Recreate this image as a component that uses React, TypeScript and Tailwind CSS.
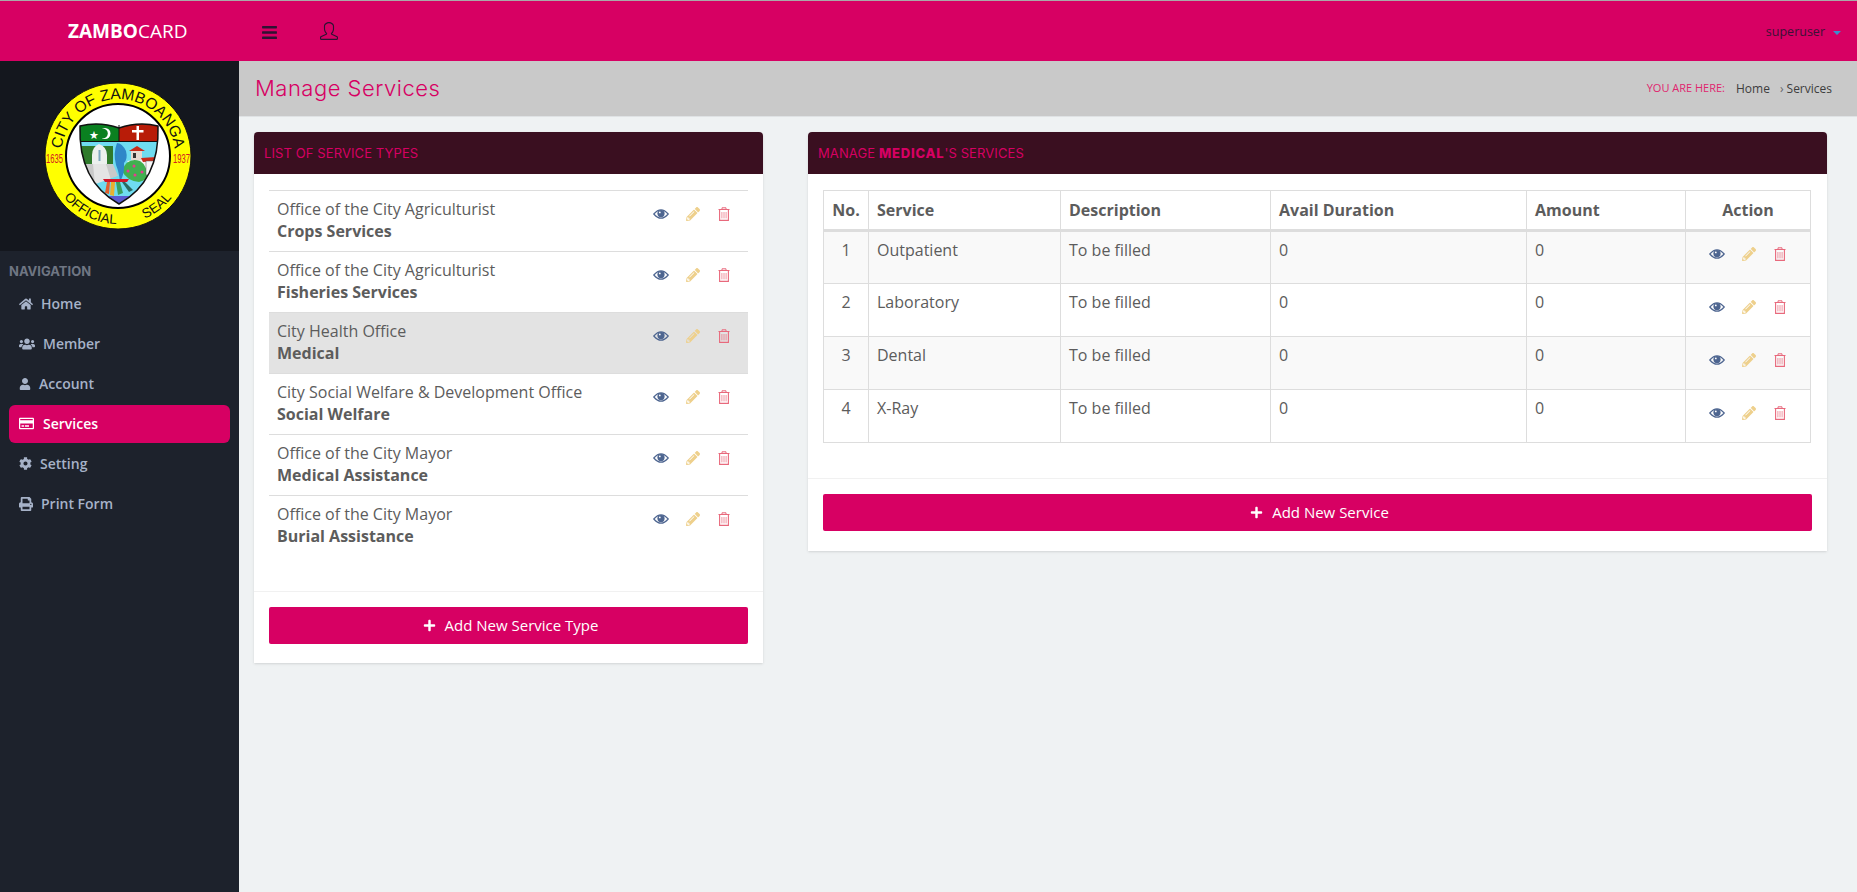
import { FaBars, FaCog, FaHome, FaPencilAlt, FaPlus, FaPrint, FaRegCreditCard, FaUser, FaUsers } from "react-icons/fa";
import { SlUser } from "react-icons/sl";

const navItems = [
    { label: "Home", icon: FaHome, gap: "gap-[8px]", size: 14 },
    { label: "Member", icon: FaUsers, gap: "gap-[8px]", size: 16 },
    { label: "Account", icon: FaUser, gap: "gap-[8px]", size: 12 },
    { label: "Services", icon: FaRegCreditCard, gap: "gap-[9px]", size: 15, active: true },
    { label: "Setting", icon: FaCog, gap: "gap-[8px]", size: 13 },
    { label: "Print Form", icon: FaPrint, gap: "gap-[8px]", size: 14 },
];

const serviceTypes = [
    { office: "Office of the City Agriculturist", name: "Crops Services" },
    { office: "Office of the City Agriculturist", name: "Fisheries Services" },
    { office: "City Health Office", name: "Medical", selected: true },
    { office: "City Social Welfare & Development Office", name: "Social Welfare" },
    { office: "Office of the City Mayor", name: "Medical Assistance" },
    { office: "Office of the City Mayor", name: "Burial Assistance" },
];

const services = ["Outpatient", "Laboratory", "Dental", "X-Ray"];

function EyeIcon() {
    return (
        <svg width="16" height="12" viewBox="0 0 16 12" className="text-[#4d6590]">
            <path d="M0.8 6 Q8 -2.4 15.2 6 Q8 14.4 0.8 6 Z" fill="none" stroke="currentColor" strokeWidth="1.2" />
            <circle cx="8" cy="5.6" r="3.6" fill="currentColor" />
            <circle cx="6.8" cy="4.4" r="0.9" fill="#fff" />
        </svg>
    );
}

function TrashIcon() {
    return (
        <svg width="12" height="14" viewBox="0 0 12 14" className="text-[#e8697c]">
            <path d="M0.5 2.5 H11.5 M4 2.5 V0.8 H8 V2.5" fill="none" stroke="currentColor" strokeWidth="1" />
            <path d="M1.6 2.5 V13.4 H10.4 V2.5" fill="none" stroke="currentColor" strokeWidth="1.1" />
            <path d="M3.9 5 V11.4 M6 5 V11.4 M8.1 5 V11.4" fill="none" stroke="currentColor" strokeWidth="1" opacity="0.7" />
        </svg>
    );
}

function RowActions() {
    return (
        <div className="flex items-center">
            <EyeIcon />
            <FaPencilAlt className="ml-[17px] text-[#eed08c]" size={14} />
            <span className="ml-[18px]"><TrashIcon /></span>
        </div>
    );
}

function Seal() {
    return (
        <svg width="150" height="150" viewBox="0 0 150 150">
            <defs>
                <path id="arcTop" d="M 21.4 94.5 A 57 57 0 1 1 128.6 94.5" />
                <path id="arcBottom" d="M 7 75 A 68 68 0 0 0 143 75" />
                <clipPath id="shieldClip">
                    <path d="M37 45 Q56 40 76 47 Q96 40 115 45 Q117 100 76 123 Q35 100 37 45 Z" />
                </clipPath>
            </defs>
            <circle cx="75" cy="75" r="73" fill="#ffff00" stroke="#111" strokeWidth="1" />
            <circle cx="75" cy="75" r="52" fill="#fff" stroke="#000" strokeWidth="2" />
            <text fontFamily="Liberation Sans, sans-serif" fontSize="15.5" fill="#111">
                <textPath href="#arcTop" startOffset="50%" textAnchor="middle">CITY OF ZAMBOANGA</textPath>
            </text>
            <text fontFamily="Liberation Sans, sans-serif" fontSize="13.5" fill="#111">
                <textPath href="#arcBottom" startOffset="35%" textAnchor="middle">OFFICIAL</textPath>
            </text>
            <text fontFamily="Liberation Sans, sans-serif" fontSize="13.5" fill="#111">
                <textPath href="#arcBottom" startOffset="71%" textAnchor="middle">SEAL</textPath>
            </text>
            <text x="3" y="82" fontFamily="Liberation Sans, sans-serif" fontSize="12" textLength="17" lengthAdjust="spacingAndGlyphs" fill="#d32020">1635</text>
            <text x="130" y="82" fontFamily="Liberation Sans, sans-serif" fontSize="12" textLength="17" lengthAdjust="spacingAndGlyphs" fill="#d32020">1937</text>
            <g clipPath="url(#shieldClip)">
                <rect x="30" y="35" width="90" height="95" fill="#6fdcf0" />
                <rect x="30" y="35" width="46" height="25" fill="#0a8020" />
                <rect x="76" y="35" width="44" height="25" fill="#b81c08" />
                <rect x="37" y="65" width="33" height="20" fill="#2f7a2c" />
                <path d="M37 83 H70 L75 95 L44 106 Z" fill="#c9c9c9" />
                <path d="M50 83 H63 L68 99 L52 104 Z" fill="#e4e4e4" />
                <path d="M56 63 Q49 66 49 74 V83 H64 V74 Q64 66 56 63 Z" fill="#ecf0ee" />
                <rect x="55.5" y="69" width="2" height="11" fill="#7fa8c0" />
                <path d="M75 95 L44 106 L76 125 L108 104 Z" fill="#6fdcf0" />
                <path d="M84 80 L114 76 V100 L106 106 Z" fill="#f2f2f2" />
                <path d="M79 90 Q84 76 97 80 Q104 84 105 98 L96 101 Q84 100 79 90 Z" fill="#41b050" />
                <circle cx="85" cy="90" r="1.5" fill="#e83a90" />
                <circle cx="91" cy="85" r="1.5" fill="#e83a90" />
                <circle cx="99" cy="91" r="1.5" fill="#e83a90" />
                <circle cx="92" cy="94" r="1.5" fill="#e83a90" />
                <path d="M86 70 L94 65 L102 70 Z" fill="#c92a1a" />
                <rect x="88" y="70" width="11" height="9" fill="#e7d9d0" />
                <rect x="90" y="72" width="3" height="5" fill="#333" />
                <path d="M98 77 L113 76 V80 L100 81 Z" fill="#c92a1a" />
                <rect x="103" y="80" width="8" height="14" fill="#f8f8f8" stroke="#555" strokeWidth="0.5" />
                <path d="M74 62 Q70 72 73 84 Q76 91 77 101 Q82 92 81 82 Q85 78 83 70 Q79 62 74 62 Z" fill="#2e87c8" />
                <path d="M62 101 H84 L86 98 H60 Z" fill="#d3162a" />
                <path d="M64 101 L62 112 L66 113 L67 101 Z" fill="#e06030" />
                <path d="M68 101 L67 114 L71 115 L72 101 Z" fill="#e8b030" />
                <path d="M73 101 L75 114 L80 112 L77 101 Z" fill="#3aa060" />
                <path d="M79 101 L86 111 L90 109 L82 101 Z" fill="#2a6a60" />
                <rect x="55" y="115" width="42" height="10" fill="#5a5ad0" />
            </g>
            <rect x="75.5" y="44" width="1" height="17" fill="#111" />
            <path d="M37 60.5 H115" stroke="#111" strokeWidth="1" />
            <path d="M37 45 Q56 40 76 47 Q96 40 115 45 Q117 100 76 123 Q35 100 37 45 Z" fill="none" stroke="#111" strokeWidth="1.5" />
            <circle cx="62" cy="52.5" r="5.5" fill="#fff" />
            <circle cx="60" cy="52.5" r="4.8" fill="#0a8020" />
            <text x="46" y="57.5" fontFamily="DejaVu Sans, sans-serif" fontSize="11" fill="#fff">★</text>
            <rect x="93.5" y="45" width="2.5" height="14" fill="#fff" />
            <rect x="89" y="49" width="11.5" height="2.5" fill="#fff" />
        </svg>
    );
}

export default function App() {
    return (
        <div className="flex h-screen flex-col overflow-hidden bg-[#eff2f3] font-['Open_Sans',sans-serif] text-[#5c5c5c]">
            <header className="flex h-[61px] shrink-0 items-center border-t border-[#a9a9a9] bg-[#d70063]">
                <div className="w-[239px] pl-[68px] text-[19px] text-white">
                    <b>ZAMBO</b>CARD
                </div>
                <button className="ml-[22px] mt-[3px] text-[#2e1233]">
                    <FaBars size={17} />
                </button>
                <button className="ml-[42px] text-[#2e1233]">
                    <SlUser size={18} />
                </button>
                <div className="ml-auto mt-[3px] flex items-center gap-2 pr-[16px] text-[12.5px] text-[#3c1136]">
                    superuser
                    <span className="h-0 w-0 border-x-[4px] border-t-[4px] border-x-transparent border-t-[#3a8fd0]" />
                </div>
            </header>

            <div className="flex min-h-0 flex-1">
                <aside className="w-[239px] shrink-0 bg-[#1d222c]">
                    <div className="flex h-[190px] items-center justify-center bg-[#14171e] pr-[3px]">
                        <Seal />
                    </div>
                    <div className="px-[9px] pt-[11px]">
                        <h5 className="font-['Inter',sans-serif] text-[13px] font-bold text-[#6f7683]">NAVIGATION</h5>
                        <nav className="mt-[2px] flex flex-col">
                            {navItems.map(item => (
                                <a
                                    key={item.label}
                                    className={`my-px flex h-[38px] items-center rounded-[6px] px-[10px] text-[14px] font-semibold ${item.gap} ${item.active ? "bg-[#d70063] text-white" : "text-[#a6b2c8]"}`}
                                >
                                    <item.icon size={item.size} />
                                    {item.label}
                                </a>
                            ))}
                        </nav>
                    </div>
                </aside>

                <main className="min-w-0 flex-1">
                    <div className="flex h-[56px] items-center justify-between border-b border-[#dfe2e4] bg-[#c9c9c9] pl-4 pr-[25px]">
                        <h2 className="font-['Inter',sans-serif] text-[22px] font-light tracking-[0.5px] text-[#d70063]">Manage Services</h2>
                        <div className="flex items-center text-[12px] text-[#3d3d3d]">
                            <span className="mr-[11px] text-[11px] text-[#e0246e]">YOU ARE HERE:</span>
                            Home
                            <span className="ml-[10px] mr-[3px] text-[#666]">›</span>
                            Services
                        </div>
                    </div>

                    <div className="flex items-start gap-[45px] pl-[15px] pr-[30px] pt-[15px]">
                        <section className="w-[509px] shrink-0 rounded-t-[4px] bg-white shadow-sm">
                            <div className="flex h-[42px] items-center rounded-t-[4px] bg-[#3a0f20] px-[10px] pt-[2px] font-['Inter',sans-serif] text-[13px] tracking-[0.1px] text-[#d70063]">
                                LIST OF SERVICE TYPES
                            </div>
                            <div className="px-[15px] pb-[35px] pt-4">
                                {serviceTypes.map(type => (
                                    <div
                                        key={type.name}
                                        className={`flex h-[61px] justify-between border-t border-[#dddddd] pl-2 pr-[18px] pt-[7px] text-[16px] leading-[22px] ${type.selected ? "bg-[#e3e3e3]" : ""}`}
                                    >
                                        <div>
                                            {type.office}
                                            <div className="font-bold">{type.name}</div>
                                        </div>
                                        <div className="pt-[9px]"><RowActions /></div>
                                    </div>
                                ))}
                            </div>
                            <div className="border-t border-[#f1f1f1] px-[15px] pb-[19px] pt-[15px]">
                                <button className="flex h-[37px] w-full items-center justify-center gap-[9px] rounded-[2px] bg-[#d70063] pl-[4px] text-[15px] text-white">
                                    <FaPlus size={13} />
                                    Add New Service Type
                                </button>
                            </div>
                        </section>

                        <section className="min-w-0 flex-1 rounded-t-[4px] bg-white shadow-sm">
                            <div className="flex h-[42px] items-center rounded-t-[4px] bg-[#3a0f20] px-[10px] pt-[2px] font-['Inter',sans-serif] text-[13px] tracking-[0.1px] text-[#d70063]">
                                <span>MANAGE <span className="font-extrabold tracking-[0.8px]">MEDICAL</span>'S SERVICES</span>
                            </div>
                            <div className="px-[15px] pb-[35px] pt-4">
                                <table className="w-[988px] table-fixed border-collapse text-[16px]">
                                    <thead>
                                        <tr className="h-[40px] border-b-[3px] border-[#dddddd] text-left">
                                            <th className="w-[45px] border border-[#dddddd] text-center">No.</th>
                                            <th className="w-[192px] border border-[#dddddd] px-2">Service</th>
                                            <th className="w-[210px] border border-[#dddddd] px-2">Description</th>
                                            <th className="w-[256px] border border-[#dddddd] px-2">Avail Duration</th>
                                            <th className="w-[159px] border border-[#dddddd] px-2">Amount</th>
                                            <th className="border border-[#dddddd] px-2 text-center">Action</th>
                                        </tr>
                                    </thead>
                                    <tbody>
                                        {services.map((service, index) => (
                                            <tr key={service} className={`h-[53px] ${index % 2 === 0 ? "bg-[#f9f9f9]" : ""}`}>
                                                <td className="border border-[#dddddd] pb-[16px] text-center align-middle">{index + 1}</td>
                                                <td className="border border-[#dddddd] px-2 pb-[16px]">{service}</td>
                                                <td className="border border-[#dddddd] px-2 pb-[16px]">To be filled</td>
                                                <td className="border border-[#dddddd] px-2 pb-[16px]">0</td>
                                                <td className="border border-[#dddddd] px-2 pb-[16px]">0</td>
                                                <td className="border border-[#dddddd] pb-[7px] pl-[23px]"><RowActions /></td>
                                            </tr>
                                        ))}
                                    </tbody>
                                </table>
                            </div>
                            <div className="border-t border-[#f1f1f1] px-[15px] pb-[20px] pt-[15px]">
                                <button className="flex h-[37px] w-full items-center justify-center gap-[9px] rounded-[2px] bg-[#d70063] pl-[4px] text-[15px] text-white">
                                    <FaPlus size={13} />
                                    Add New Service
                                </button>
                            </div>
                        </section>
                    </div>
                </main>
            </div>
        </div>
    );
}
